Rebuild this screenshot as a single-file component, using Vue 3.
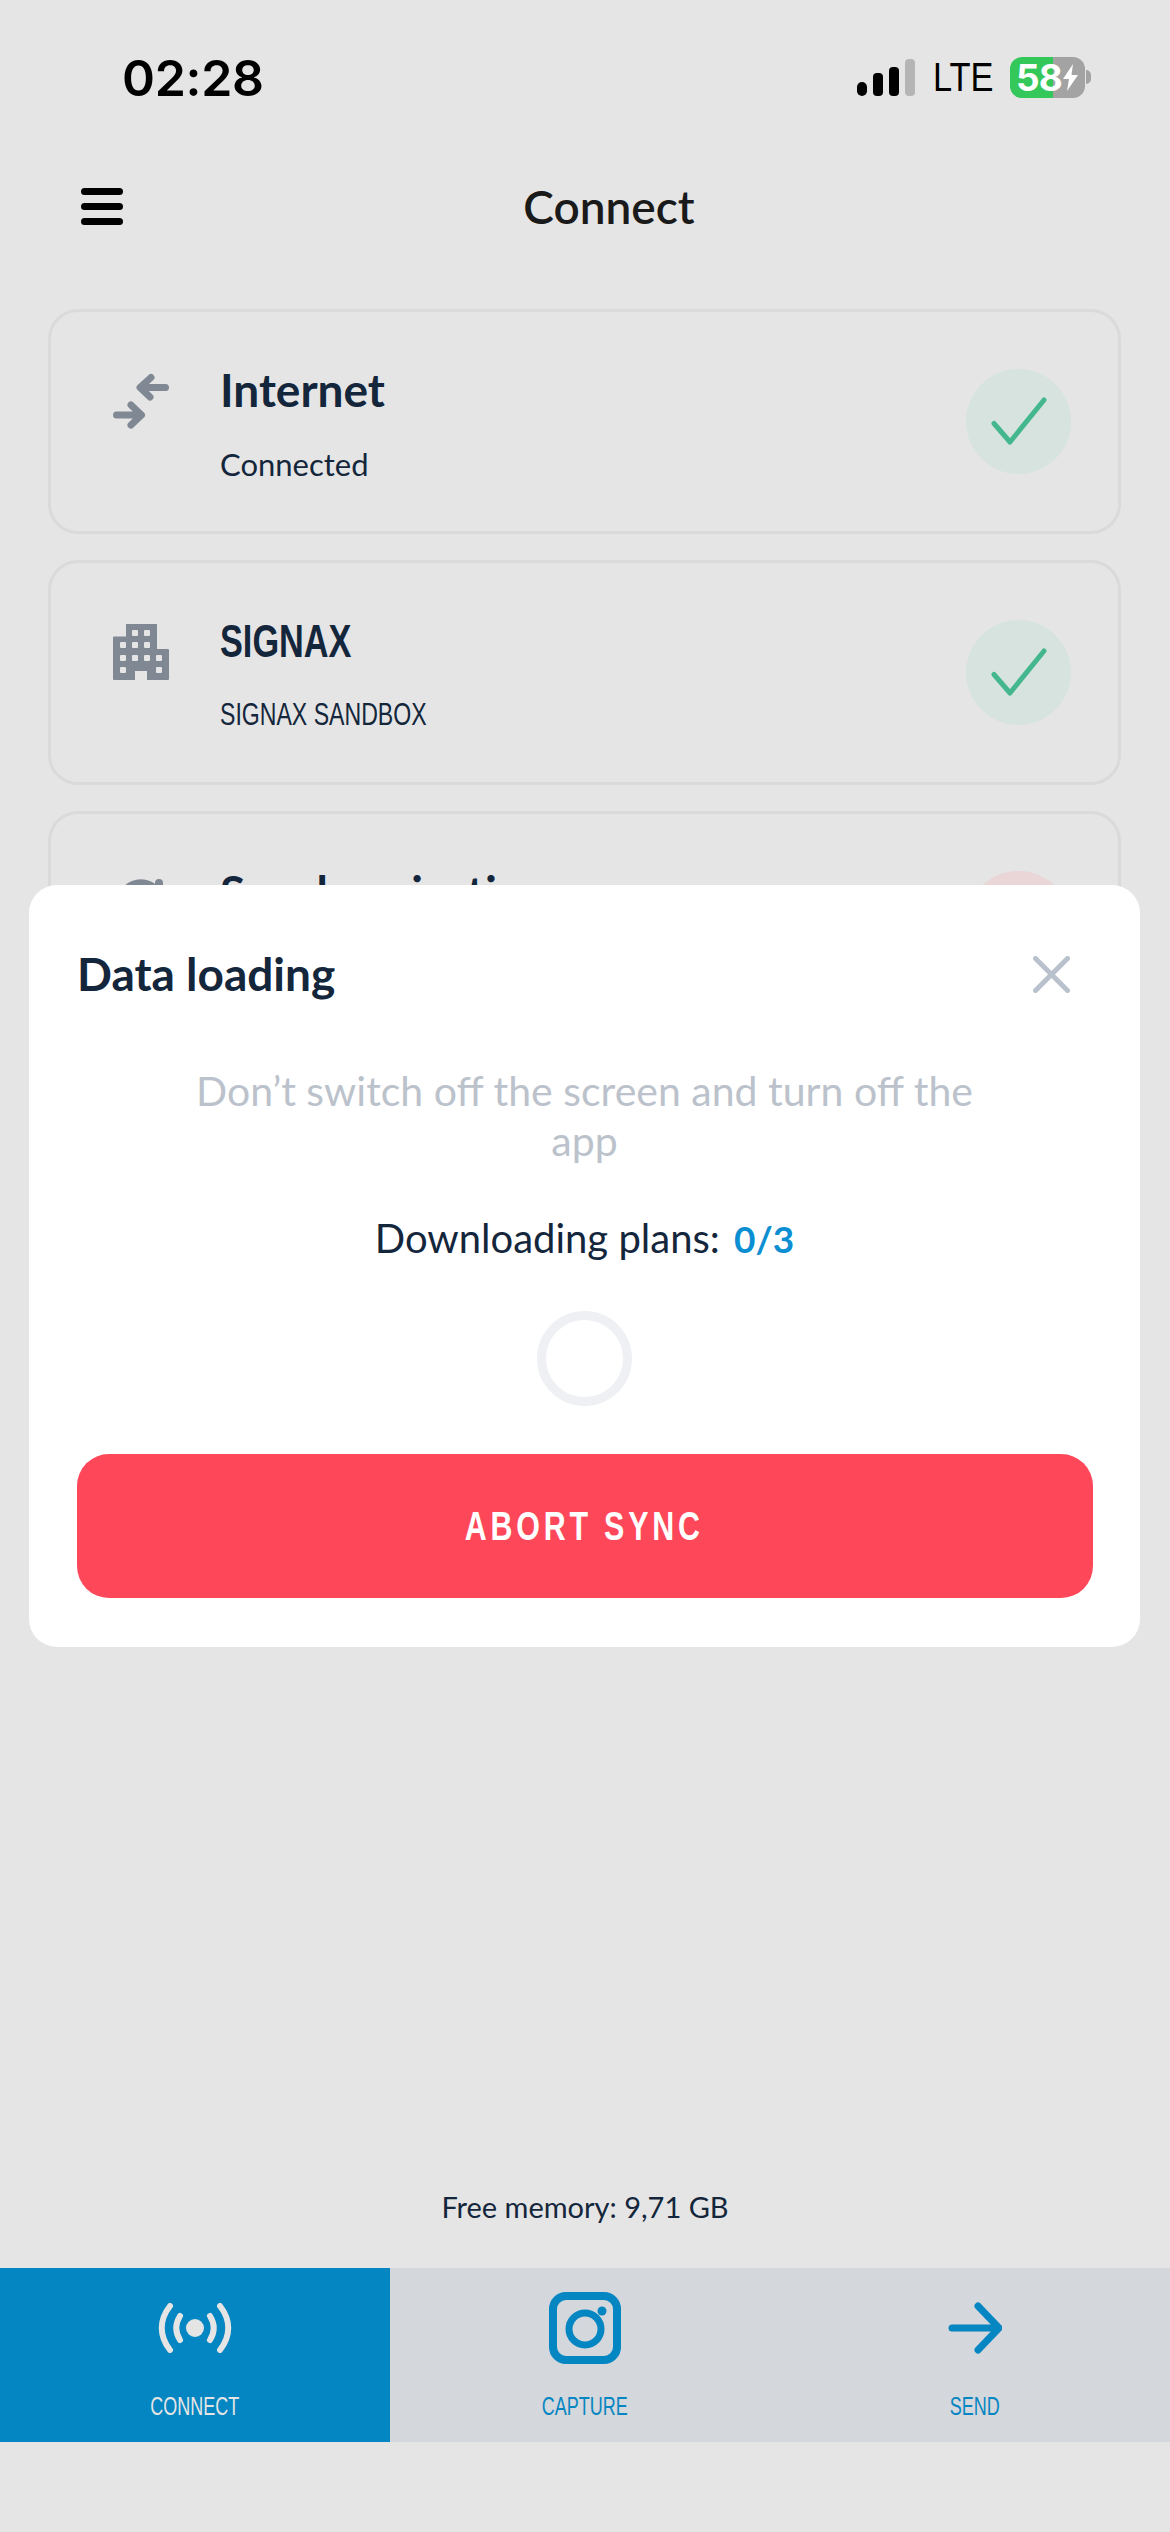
<script setup>
const cards = [
  { title: 'Internet', sub: 'Connected', icon: 'net', ok: true },
  { title: 'SIGNAX', sub: 'SIGNAX SANDBOX', icon: 'org', ok: true, caps: true },
  { title: 'Synchronization', sub: 'Not synced', icon: 'sync', ok: false }
]
</script>

<template>
  <div class="page">
    <div class="status">
      <span class="time">02:28</span>
      <div class="status-right">
        <svg class="signal" width="58" height="38" viewBox="0 0 58 38">
          <rect x="0" y="24" width="10" height="14" rx="5" fill="#000" />
          <rect x="16" y="15" width="10" height="23" rx="4" fill="#000" />
          <rect x="32" y="9" width="10" height="29" rx="4" fill="#000" />
          <rect x="48" y="1" width="10" height="37" rx="4" fill="#b5b5b5" />
        </svg>
        <span class="lte">LTE</span>
        <div class="battery">
          <div class="batt-body">
            <span class="batt-num">58</span>
            <svg class="bolt" width="17" height="27" viewBox="0 0 17 27"><path d="M11 0 1 15h6l-2 12L16 11H9.500z" fill="#fff" /></svg>
          </div>
          <span class="nub"></span>
        </div>
      </div>
    </div>

    <header class="header">
      <svg class="menu" width="42" height="37" viewBox="0 0 42 37">
        <path d="M3.500 3.500h35M3.500 18.500h35M3.500 33.500h35" stroke="#000" stroke-width="7" stroke-linecap="round" />
      </svg>
      <h1 class="heading">Connect</h1>
    </header>

    <main class="list">
      <section v-for="c in cards" :key="c.title" class="card">
        <div class="card-icon">
          <svg v-if="c.icon === 'net'" width="56" height="56" viewBox="0 0 56 56" fill="none" stroke="#808993" stroke-width="7" stroke-linecap="round" stroke-linejoin="round">
            <path d="M52.500 14.500H28M38 4.500 27 14.500l10 9.500" />
            <path d="M3.500 42H28M18 32l10.500 10L18 52" />
          </svg>
          <svg v-else-if="c.icon === 'org'" width="56" height="56" viewBox="0 0 56 56">
            <path fill="#808993" d="M1 12.500h12V1.500a1 1 0 0 1 1-1.500h29a1 1 0 0 1 1 1.500V25h11a1 1 0 0 1 1 1v29a1 1 0 0 1-1 1H34V47h-12v9H1a1 1 0 0 1-1-1V13.500a1 1 0 0 1 1-1z" />
            <g fill="#e5e5e5">
              <rect x="19" y="6" width="6" height="6" rx="1" /><rect x="31" y="6" width="6" height="6" rx="1" />
              <rect x="7" y="18" width="6" height="6" rx="1" /><rect x="19" y="18" width="6" height="6" rx="1" /><rect x="31" y="18" width="6" height="6" rx="1" />
              <rect x="7" y="31" width="6" height="6" rx="1" /><rect x="19" y="31" width="6" height="6" rx="1" /><rect x="31" y="31" width="6" height="6" rx="1" /><rect x="43" y="31" width="6" height="6" rx="1" />
              <rect x="7" y="43" width="6" height="6" rx="1" /><rect x="43" y="43" width="6" height="6" rx="1" />
            </g>
          </svg>
          <svg v-else width="56" height="56" viewBox="0 0 56 56" fill="none" stroke="#808993" stroke-width="8" stroke-linecap="round">
            <path d="M8 28a20 20 0 0 1 34-14l6 6M46 8v12H34" />
          </svg>
        </div>
        <div class="info">
          <div class="title" :class="{ narrow: c.caps }">{{ c.title }}</div>
          <div class="sub" :class="{ narrow: c.caps }">{{ c.sub }}</div>
        </div>
        <div class="state" :class="{ bad: !c.ok }">
          <svg v-if="c.ok" width="56" height="56" viewBox="0 0 56 56" fill="none" stroke="#44B78F" stroke-width="5" stroke-linecap="round" stroke-linejoin="round">
            <path d="M3 29.500 19 48 53 6" />
          </svg>
        </div>
      </section>
    </main>

    <p class="memory">Free memory: 9,71 GB</p>

    <nav class="tabs">
      <div class="tab active">
        <div class="tab-icon">
          <svg width="74" height="50" viewBox="0 0 74 50" fill="none" stroke="#e5e5e5" stroke-width="6" stroke-linecap="round">
            <circle cx="37" cy="25" r="9" fill="#e5e5e5" stroke="none" />
            <path d="M12 3c-11 14-11 30 0 44M62 3c11 14 11 30 0 44M22 13c-5 8-5 16 0 24M52 13c5 8 5 16 0 24" />
          </svg>
        </div>
        <span class="tab-label">CONNECT</span>
      </div>
      <div class="tab">
        <div class="tab-icon">
          <svg width="72" height="72" viewBox="0 0 72 72" fill="none" stroke="#0486C2">
            <rect x="4" y="4" width="64" height="64" rx="13" stroke-width="8" />
            <circle cx="36" cy="37" r="16" stroke-width="7" />
            <circle cx="53" cy="19" r="4.500" fill="#0486C2" stroke="none" />
          </svg>
        </div>
        <span class="tab-label">CAPTURE</span>
      </div>
      <div class="tab">
        <div class="tab-icon">
          <svg width="54" height="52" viewBox="0 0 54 52" fill="none" stroke="#0486C2" stroke-width="7" stroke-linecap="round" stroke-linejoin="round">
            <path d="M4 26h46M30 4l21 22-21 22" />
          </svg>
        </div>
        <span class="tab-label">SEND</span>
      </div>
    </nav>

    <aside class="modal">
      <div class="modal-head">
        <h2 class="modal-title">Data loading</h2>
        <svg width="37" height="37" viewBox="0 0 37 37" stroke="#B9C2CC" stroke-width="5" stroke-linecap="round">
          <path d="M2.500 2.500l32 32M34.500 2.500l-32 32" />
        </svg>
      </div>
      <p class="modal-desc">Don’t switch off the screen and turn off the<br />app</p>
      <p class="modal-progress">Downloading plans: <b class="count">0/3</b></p>
      <div class="spinner"></div>
      <button class="abort"><span class="abort-text">ABORT SYNC</span></button>
    </aside>
  </div>
</template>

<style>
html, body { margin: 0; background: #e5e5e5; }
</style>

<style scoped>
.page {
  position: relative;
  width: 1170px;
  height: 2532px;
  overflow: hidden;
  background: #e5e5e5;
  display: flex;
  flex-direction: column;
  font-family: Lato, "Noto Sans", sans-serif;
  color: #14263b;
}
.status {
  height: 150px;
  box-sizing: border-box;
  padding: 45px 79px 0 122px;
  display: flex;
  justify-content: space-between;
  align-items: flex-start;
}
.time {
  font-family: Inter, sans-serif;
  font-weight: 600;
  font-size: 50px;
  line-height: 66px;
  letter-spacing: -0.3px;
  color: #000;
}
.status-right {
  display: flex;
  align-items: center;
  height: 56px;
  margin-top: 4px;
}
.signal { margin-right: 18px; }
.lte {
  display: inline-block;
  font-family: "Liberation Sans", sans-serif;
  font-size: 40px;
  color: #000;
  margin-right: 19px;
  width: 58px;
  white-space: nowrap;
  transform: scaleX(0.86);
  transform-origin: left center;
}
.battery { display: flex; align-items: center; }
.batt-body {
  width: 75px;
  height: 41px;
  border-radius: 12px;
  background: linear-gradient(90deg, #34c759 0 43px, #a3a3a3 43px);
  display: flex;
  align-items: center;
  padding-left: 6px;
  box-sizing: border-box;
}
.batt-num {
  font-family: Inter, sans-serif;
  font-weight: 700;
  font-size: 37px;
  color: #fff;
  letter-spacing: -1px;
}
.nub {
  width: 5px;
  height: 14px;
  margin-left: 1px;
  border-radius: 0 5px 5px 0;
  background: #a3a3a3;
}
.header {
  position: relative;
  height: 114px;
  box-sizing: border-box;
  padding-left: 48px;
  display: flex;
  align-items: center;
  justify-content: center;
}
.menu { position: absolute; left: 81px; top: 38px; }
.heading {
  margin: 0;
  font-size: 46px;
  font-weight: 600;
  line-height: 60px;
  color: #1a1a1a;
}
.list {
  flex: 1;
  padding: 45px 49px 0 48px;
  display: flex;
  flex-direction: column;
  gap: 26px;
}
.card {
  height: 225px;
  box-sizing: border-box;
  border: 3px solid #dadada;
  border-radius: 30px;
  display: flex;
  padding: 0 47px 0 62px;
}
.card-icon { width: 56px; height: 56px; margin-top: 61px; margin-right: 51px; }
.info { padding-top: 50px; }
.title { font-size: 46px; font-weight: 700; line-height: 56px; }
.sub { font-size: 31px; line-height: 40px; margin-top: 26px; }
.narrow {
  font-family: "Liberation Sans", sans-serif;
  transform: scaleX(0.745);
  transform-origin: left center;
  white-space: nowrap;
}
.state {
  width: 105px;
  height: 105px;
  margin-left: auto;
  align-self: center;
  border-radius: 50%;
  background: #d6e3df;
  display: flex;
  align-items: center;
  justify-content: center;
}
.state.bad { background: #ead5d7; }
.memory {
  margin: 0 0 41px;
  text-align: center;
  font-size: 29px;
  line-height: 40px;
}
.tabs {
  display: grid;
  grid-template-columns: repeat(3, 390px);
  margin-bottom: 90px;
  background: #d4d7db;
}
.tab {
  height: 174px;
  box-sizing: border-box;
  padding-top: 24px;
  display: flex;
  flex-direction: column;
  align-items: center;
}
.tab.active { background: #0486c2; }
.tab-icon {
  height: 72px;
  display: flex;
  align-items: center;
  justify-content: center;
  margin-bottom: 27px;
}
.tab-label {
  display: inline-block;
  font-family: "Liberation Sans", sans-serif;
  font-size: 25px;
  line-height: 30px;
  color: #0486c2;
  transform: scaleX(0.72);
}
.tab.active .tab-label { color: #e5e5e5; }
.modal {
  position: absolute;
  left: 29px;
  top: 885px;
  width: 1111px;
  height: 762px;
  box-sizing: border-box;
  padding: 59px 48px 0;
  background: #fff;
  border-radius: 28px;
  display: flex;
  flex-direction: column;
  align-items: center;
}
.modal-head {
  width: 100%;
  display: flex;
  justify-content: space-between;
  align-items: center;
  padding-right: 22px;
  box-sizing: border-box;
}
.modal-title { margin: 0; font-size: 46px; font-weight: 700; line-height: 60px; }
.modal-desc {
  margin: 62px 0 0;
  text-align: center;
  font-size: 41px;
  line-height: 50px;
  color: #bbc2cb;
}
.modal-progress { margin: 47px 0 0; font-size: 40px; line-height: 50px; }
.count { margin-left: 4px; color: #0b8fd2; font-size: 37px; font-weight: 700; }
.spinner {
  width: 95px;
  height: 95px;
  margin-top: 47px;
  box-sizing: border-box;
  border: 9px solid #eef0f3;
  border-radius: 50%;
}
.abort {
  width: 1016px;
  height: 144px;
  margin-top: 48px;
  border: 0;
  border-radius: 32px;
  background: #ff475a;
  color: #fff;
  font-family: "Liberation Sans", sans-serif;
  font-weight: 700;
  font-size: 40px;
  letter-spacing: 5px;
}
.abort-text { display: inline-block; transform: scaleX(0.76); }
</style>
